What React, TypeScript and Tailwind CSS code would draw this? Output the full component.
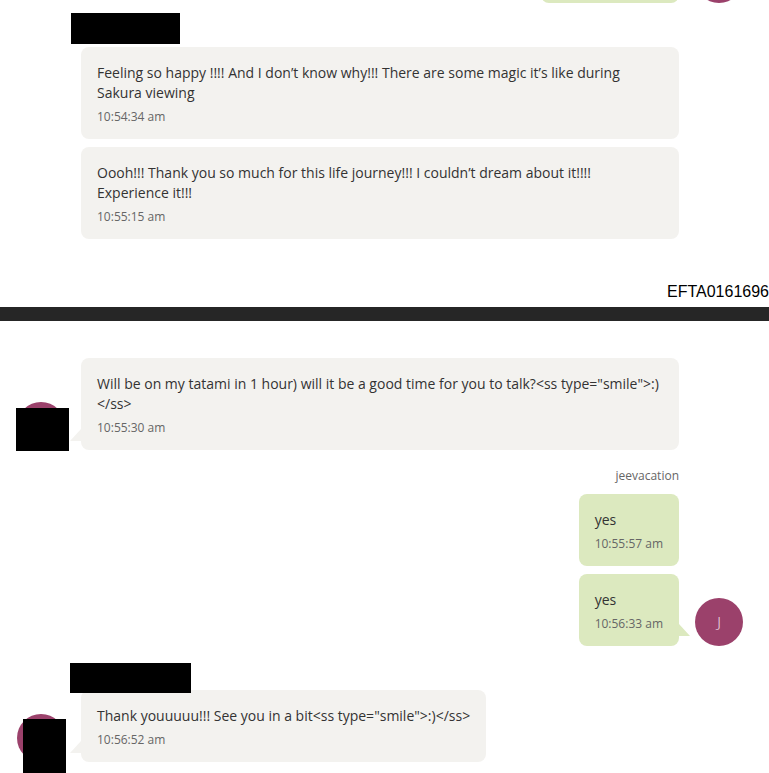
// chat transcript page: end of one printed page, page break, start of the next

type Side = 'left' | 'right';

function Redacted({ className }: { className: string }) {
  return <div className={`relative z-10 bg-black ${className}`} />;
}

function Avatar({ letter }: { letter?: string }) {
  return (
    <div className="w-12 h-12 shrink-0 rounded-full bg-[#9b416b] flex items-center justify-center text-white/90 text-[15px] font-light">
      {letter}
    </div>
  );
}

// the little triangle that points at the avatar
function Tail({ side, color }: { side: Side; color: string }) {
  return side === 'left' ? (
    <svg className="absolute left-[-11px] bottom-[9px] w-[11px] h-[12px]" viewBox="0 0 11 12">
      <polygon points="11,0 0,12 11,12" fill={color} />
    </svg>
  ) : (
    <svg className="absolute right-[-11px] bottom-[10px] w-[11px] h-[12px]" viewBox="0 0 11 12">
      <polygon points="0,0 11,12 0,12" fill={color} />
    </svg>
  );
}

function Bubble({ side, text, time, tail }: { side: Side; text: string; time: string; tail?: boolean }) {
  const bg = side === 'left' ? 'bg-[#f3f2ef]' : 'bg-[#dce9bf]';
  return (
    <div className={`relative max-w-[598px] rounded-lg ${bg} px-4 pt-4 pb-[13px]`}>
      <p className="text-[14px] leading-5 text-[#333] break-words">{text}</p>
      <p className="mt-[5px] text-[12px] leading-[18px] text-[#666]">{time}</p>
      {tail && <Tail side={side} color={side === 'left' ? '#f3f2ef' : '#dce9bf'} />}
    </div>
  );
}

function LeftRow({ text, time, avatar }: { text: string; time: string; avatar?: React.ReactNode }) {
  return (
    <div className="flex items-end gap-4 pl-[17px]">
      <div className="w-12 shrink-0">{avatar}</div>
      <Bubble side="left" text={text} time={time} tail={!!avatar} />
    </div>
  );
}

function RightRow({ text, time, avatar }: { text: string; time: string; avatar?: boolean }) {
  return (
    <div className="flex items-end justify-end gap-4 pr-[26px]">
      <Bubble side="right" text={text} time={time} tail={avatar} />
      <div className="w-12 shrink-0">{avatar && <Avatar letter="J" />}</div>
    </div>
  );
}

// avatar with a redaction box laid over it
function HiddenAvatar({ box }: { box: string }) {
  return (
    <div className="relative">
      <Avatar />
      <div className={`absolute bg-black ${box}`} />
    </div>
  );
}

export default function App() {
  return (
    <div className="w-[769px] min-h-[773px] overflow-hidden bg-white font-['Open_Sans','Noto_Sans',sans-serif]">
      {/* tail end of the previous page */}
      <div className="-mt-[69px]">
        <div className="flex items-end justify-end gap-4 pr-[26px]">
          <div className="relative w-[138px] h-[72px] rounded-lg bg-[#dce9bf]" />
          <Avatar />
        </div>
      </div>

      <Redacted className="ml-[71px] mt-[10px] w-[109px] h-[31px]" />
      <div className="mt-[3px] flex flex-col gap-2">
        <LeftRow
          text="Feeling so happy !!!! And I don’t know why!!! There are some magic it’s like during Sakura viewing"
          time="10:54:34 am"
        />
        <LeftRow
          text="Oooh!!! Thank you so much for this life journey!!! I couldn’t dream about it!!!! Experience it!!!"
          time="10:55:15 am"
        />
      </div>

      <p className="mt-[44px] text-right font-['Liberation_Sans',Arial,sans-serif] text-[16px] leading-[18px] text-black">
        EFTA0161696
      </p>
      <div className="mt-[6px] h-[14px] bg-[#262626]" />

      {/* next page */}
      <div className="mt-[37px]">
        <LeftRow
          text={'Will be on my tatami in 1 hour) will it be a good time for you to talk?<ss type="smile">:) </ss>'}
          time="10:55:30 am"
          avatar={<HiddenAvatar box="left-[-1px] top-[6px] w-[53px] h-[43px]" />}
        />
      </div>

      <p className="mt-[17px] pr-[90px] text-right text-[12px] leading-[18px] text-[#666]">jeevacation</p>
      <div className="mt-[9px] flex flex-col gap-2">
        <RightRow text="yes" time="10:55:57 am" />
        <RightRow text="yes" time="10:56:33 am" avatar />
      </div>

      <Redacted className="ml-[70px] mt-[17px] -mb-[3px] w-[121px] h-[30px]" />
      <LeftRow
        text={'Thank youuuuu!!! See you in a bit<ss type="smile">:)</ss>'}
        time="10:56:52 am"
        avatar={<HiddenAvatar box="left-[6px] top-[5px] w-[43px] h-[60px]" />}
      />
    </div>
  );
}
